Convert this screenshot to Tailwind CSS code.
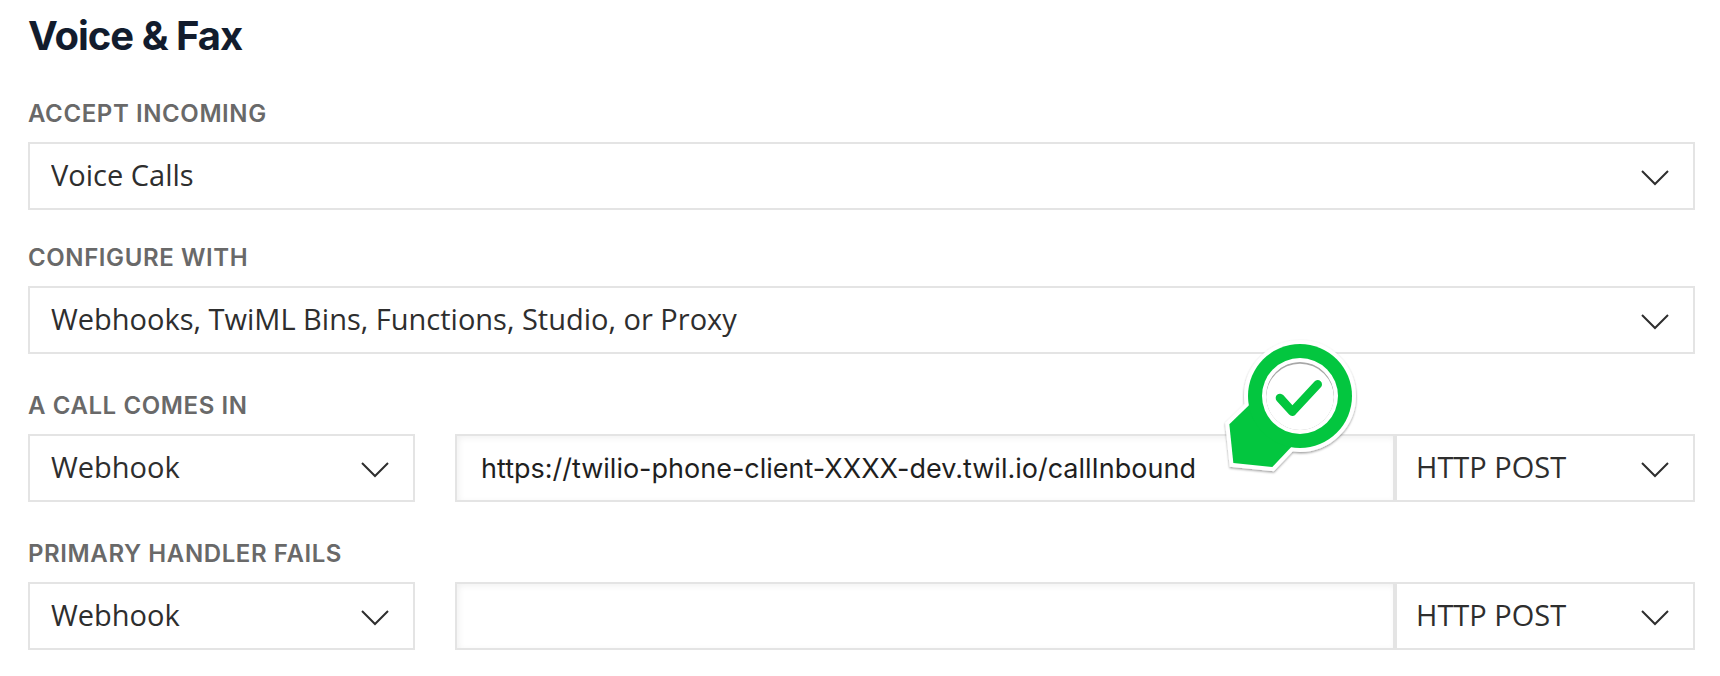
<!DOCTYPE html>
<html lang="en">
<head>
<meta charset="utf-8">
<meta name="viewport" content="width=device-width, initial-scale=1">
<title>Voice &amp; Fax</title>
<script src="https://cdn.jsdelivr.net/npm/@tailwindcss/browser@4"></script>
</head>
<body class="bg-white font-['Inter',sans-serif]">
<svg class="hidden">
  <symbol id="chevron" viewBox="0 0 28 16"><path d="M1 1 14 14 27 1" fill="none" stroke="#2e2e2e" stroke-width="2"/></symbol>
</svg>
<form class="pt-3 pb-6 pl-7 pr-[25px]">
  <h1 class="mb-10 text-[40px] leading-12 font-bold tracking-tight text-[#121c2d]">Voice &amp; Fax</h1>

  <div class="mb-[34px]">
    <label for="accept" class="mb-3.5 block text-2xl leading-7 font-semibold tracking-wide text-[#696969]">ACCEPT INCOMING</label>
    <div class="grid items-center">
      <select id="accept" class="col-start-1 row-start-1 h-17 w-full appearance-none border-2 border-[#e4e4e4] bg-white pb-0.5 pl-[21px] pr-16 font-['Open_Sans',sans-serif] text-[29px] text-[#2e2e2e]"><option>Voice Calls</option></select>
      <svg class="pointer-events-none col-start-1 row-start-1 mt-1 mr-[26px] h-4 w-7 justify-self-end"><use href="#chevron"/></svg>
    </div>
  </div>

  <div class="mb-[38px]">
    <label for="configure" class="mb-3.5 block text-2xl leading-7 font-semibold tracking-wide text-[#696969]">CONFIGURE WITH</label>
    <div class="grid items-center">
      <select id="configure" class="col-start-1 row-start-1 h-17 w-full appearance-none border-2 border-[#e4e4e4] bg-white pb-0.5 pl-[21px] pr-16 font-['Open_Sans',sans-serif] text-[29px] text-[#2e2e2e]"><option>Webhooks, TwiML Bins, Functions, Studio, or Proxy</option></select>
      <svg class="pointer-events-none col-start-1 row-start-1 mt-1 mr-[26px] h-4 w-7 justify-self-end"><use href="#chevron"/></svg>
    </div>
  </div>

  <div class="mb-[38px]">
    <label for="call" class="mb-3.5 block text-2xl leading-7 font-semibold tracking-wide text-[#696969]">A CALL COMES IN</label>
    <div class="flex">
      <div class="mr-10 grid w-[387px] items-center">
        <select id="call" class="col-start-1 row-start-1 h-17 w-full appearance-none border-2 border-[#e4e4e4] bg-white pb-0.5 pl-[21px] pr-16 font-['Open_Sans',sans-serif] text-[29px] text-[#2e2e2e]"><option>Webhook</option></select>
        <svg class="pointer-events-none col-start-1 row-start-1 mt-1 mr-[26px] h-4 w-7 justify-self-end"><use href="#chevron"/></svg>
      </div>
      <div class="relative min-w-0 flex-1">
        <input type="text" aria-label="A call comes in URL" value="https://twilio-phone-client-XXXX-dev.twil.io/callInbound" class="h-17 w-full border-2 border-[#e4e4e4] bg-white px-6 text-[27px] text-[#1f1f1f] shadow-[inset_2px_2px_6px_#0000000f]">
        <!-- Success marker pointing at the URL -->
        <svg class="pointer-events-none absolute -top-[104px] right-[15px] h-[150px] w-[180px]" viewBox="0 0 540 450" aria-hidden="true">
          <defs>
            <filter id="lift" x="-20%" y="-20%" width="140%" height="140%"><feDropShadow dx="0" dy="4" stdDeviation="3" flood-color="#000" flood-opacity=".4"/></filter>
            <filter id="soften" x="-20%" y="-20%" width="140%" height="140%"><feGaussianBlur stdDeviation="2"/></filter>
            <clipPath id="dial"><circle cx="300" cy="198" r="102"/></clipPath>
          </defs>
          <g filter="url(#lift)" fill="#fff" stroke="#fff" stroke-width="24">
            <circle cx="300" cy="198" r="156"/>
            <path d="M88 283 147 226 273 352 217 411 100 399Z"/>
          </g>
          <path d="M88 283 147 226 200 180 300 320 273 352 217 411 100 399Z" fill="#03c63f"/>
          <circle cx="300" cy="198" r="156" fill="#03c63f"/>
          <circle cx="300" cy="198" r="114" fill="#fff"/>
          <g clip-path="url(#dial)">
            <circle cx="300" cy="198" r="103" fill="#a8a8a8"/>
            <circle cx="300" cy="203" r="102" fill="#fff" filter="url(#soften)"/>
          </g>
          <path d="M240 204 277 245 353 163" fill="none" stroke="#03c63f" stroke-width="26" stroke-linecap="round" stroke-linejoin="round"/>
        </svg>
      </div>
      <div class="grid w-[300px] items-center">
        <select aria-label="A call comes in HTTP method" class="col-start-1 row-start-1 h-17 w-full appearance-none border-2 border-[#e4e4e4] bg-white pb-0.5 pl-[19px] pr-16 font-['Open_Sans',sans-serif] text-[29px] text-[#2e2e2e]"><option>HTTP POST</option></select>
        <svg class="pointer-events-none col-start-1 row-start-1 mt-1 mr-[26px] h-4 w-7 justify-self-end"><use href="#chevron"/></svg>
      </div>
    </div>
  </div>

  <div>
    <label for="fails" class="mb-3.5 block text-2xl leading-7 font-semibold tracking-wide text-[#696969]">PRIMARY HANDLER FAILS</label>
    <div class="flex">
      <div class="mr-10 grid w-[387px] items-center">
        <select id="fails" class="col-start-1 row-start-1 h-17 w-full appearance-none border-2 border-[#e4e4e4] bg-white pb-0.5 pl-[21px] pr-16 font-['Open_Sans',sans-serif] text-[29px] text-[#2e2e2e]"><option>Webhook</option></select>
        <svg class="pointer-events-none col-start-1 row-start-1 mt-1 mr-[26px] h-4 w-7 justify-self-end"><use href="#chevron"/></svg>
      </div>
      <div class="min-w-0 flex-1">
        <input type="text" aria-label="Primary handler fails URL" class="h-17 w-full border-2 border-[#e4e4e4] bg-white px-6 text-[27px] text-[#1f1f1f] shadow-[inset_2px_2px_6px_#0000000f]">
      </div>
      <div class="grid w-[300px] items-center">
        <select aria-label="Primary handler fails HTTP method" class="col-start-1 row-start-1 h-17 w-full appearance-none border-2 border-[#e4e4e4] bg-white pb-0.5 pl-[19px] pr-16 font-['Open_Sans',sans-serif] text-[29px] text-[#2e2e2e]"><option>HTTP POST</option></select>
        <svg class="pointer-events-none col-start-1 row-start-1 mt-1 mr-[26px] h-4 w-7 justify-self-end"><use href="#chevron"/></svg>
      </div>
    </div>
  </div>
</form>
</body>
</html>
